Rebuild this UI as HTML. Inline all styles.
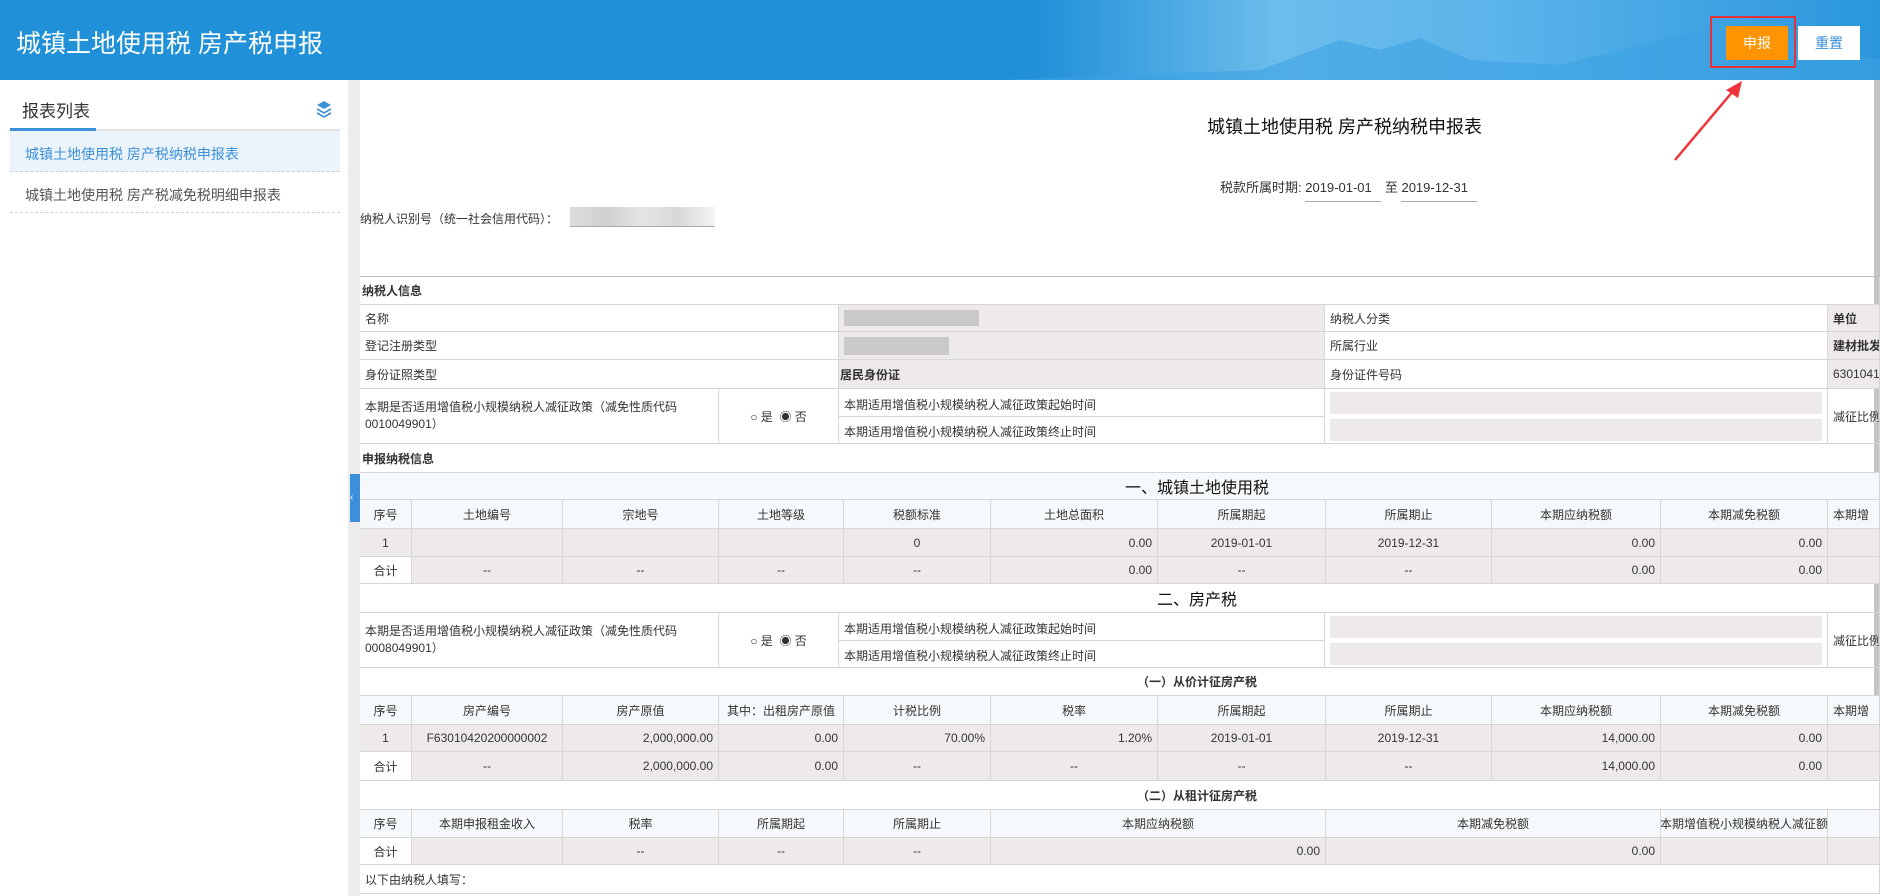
<!DOCTYPE html><html><head><meta charset="utf-8"><style>
*{margin:0;padding:0;box-sizing:border-box}
body{width:1880px;height:896px;overflow:hidden;background:#fff;font-family:"Liberation Sans","Noto Sans CJK SC",sans-serif;font-size:12px;color:#333;position:relative}
.hd{position:absolute;left:0;top:0;width:1880px;height:80px;background:linear-gradient(90deg,#2090d8 0%,#2090d8 55%,#6dbdec 68%,#5ab3ea 80%,#2a96dc 100%);overflow:hidden}
.hd h1{position:absolute;left:16px;top:24px;font-size:25px;font-weight:normal;color:#fff}
.a{position:absolute}
.row{position:absolute;left:360px;display:flex;width:1520px}
.c{border-right:1px solid #d6d6d6;border-bottom:1px solid #d6d6d6;display:flex;align-items:center;padding:0 5px;white-space:nowrap;overflow:hidden;height:100%}
.g{background:#efeaea}
.ct{justify-content:center}.r{justify-content:flex-end}
.w{background:#fff}.hb{background:#f6f9fb}
</style></head><body>
<div class="hd"><h1>城镇土地使用税 房产税申报</h1>
<svg class="a" style="left:1000px;top:0" width="880" height="80"><path d="M0 80 L260 70 L340 40 L380 50 L420 38 L470 60 L560 65 L640 45 L700 30 L730 20 L780 35 L820 50 L880 60 L880 80Z" fill="#3ca2e2" opacity=".6"/></svg>
<div class="a" style="left:1710px;top:16px;width:86px;height:52px;border:2px solid #e8323a"></div>
<div class="a" style="left:1726px;top:26px;width:62px;height:34px;background:#ff9400;color:#fff;font-size:14px;text-align:center;line-height:34px">申报</div>
<div class="a" style="left:1798px;top:26px;width:62px;height:34px;background:#fff;color:#3a8fd8;font-size:14px;text-align:center;line-height:34px">重置</div>
</div>
<svg class="a" style="left:1660px;top:76px" width="100" height="100"><line x1="15" y1="84" x2="74" y2="14" stroke="#f0343c" stroke-width="2.5"/><path d="M82 5 L66 14 L78 22Z" fill="#f0343c"/></svg>
<div class="a" style="left:22px;top:97px;font-size:17px;color:#333">报表列表</div>
<svg class="a" style="left:316px;top:100px" width="16" height="18"><path d="M8 1 L15 5 L8 9 L1 5Z" fill="#3c8fd9"/><path d="M1 9 L8 13 L15 9" stroke="#3c8fd9" fill="none" stroke-width="1.6"/><path d="M1 13 L8 17 L15 13" stroke="#3c8fd9" fill="none" stroke-width="1.6"/></svg>
<div class="a" style="left:10px;top:129px;width:330px;height:2px;background:#e2e2e2"></div>
<div class="a" style="left:10px;top:128px;width:86px;height:3px;background:#3c8fd9"></div>
<div class="a" style="left:10px;top:131px;width:330px;height:41px;background:#ebf4fc;border-bottom:1px dashed #d0d0d0;color:#3c8fd9;font-size:14px;padding:13px 15px">城镇土地使用税 房产税纳税申报表</div>
<div class="a" style="left:10px;top:172px;width:330px;height:41px;border-bottom:1px dashed #d0d0d0;color:#555;font-size:14px;padding:13px 15px">城镇土地使用税 房产税减免税明细申报表</div>
<div class="a" style="left:348px;top:80px;width:12px;height:816px;background:#ececec"></div>
<div class="a" style="left:350px;top:474px;width:10px;height:48px;background:#3c8fd9;color:#fff;font-size:10px;line-height:48px">‹</div>
<div class="a" style="left:1874px;top:80px;width:6px;height:680px;background:#c4c4c4"></div>
<div class="a" style="left:1207px;top:113px;font-size:18px;color:#111">城镇土地使用税 房产税纳税申报表</div>
<div class="a" style="left:1220px;top:177px;font-size:13px;color:#333">税款所属时期: <span style="display:inline-block;width:76px;border-bottom:1px solid #aaa;padding-bottom:6px">2019-01-01</span> 至 <span style="display:inline-block;width:76px;border-bottom:1px solid #aaa;padding-bottom:6px">2019-12-31</span></div>
<div class="a" style="left:360px;top:210px;font-size:12px">纳税人识别号（统一社会信用代码）：</div>
<div class="a" style="left:570px;top:207px;width:145px;height:20px;background:linear-gradient(90deg,#ddd,#d0d0d0,#e5e5e5,#d8d8d8,#f4f4f4);border-bottom:1px solid #aaa"></div>
<div class="a" style="left:360px;top:276px;width:1520px;border-top:1px solid #bbb"></div>

<div class="row" style="top:277px;height:28px"><div class="c" style="width:1520px;font-weight:bold;padding-left:2px">纳税人信息</div></div>
<div class="row" style="top:305px;height:27px"><div class="c" style="width:479px">名称</div><div class="c g" style="width:486px"><span style="width:135px;height:16px;background:#bbb;opacity:.7"></span></div><div class="c" style="width:503px">纳税人分类</div><div class="c g" style="width:52px;font-weight:bold">单位</div></div>
<div class="row" style="top:332px;height:28px"><div class="c" style="width:479px">登记注册类型</div><div class="c g" style="width:486px"><span style="width:105px;height:18px;background:#bbb;opacity:.7"></span></div><div class="c" style="width:503px">所属行业</div><div class="c g" style="width:52px;font-weight:bold">建材批发</div></div>
<div class="row" style="top:360px;height:29px"><div class="c" style="width:479px">身份证照类型</div><div class="c g" style="width:486px;font-weight:bold;padding-left:1px">居民身份证</div><div class="c" style="width:503px">身份证件号码</div><div class="c g" style="width:52px">6301041</div></div>
<div class="row" style="top:389px;height:55px"><div class="c" style="width:359px;white-space:normal;line-height:17px">本期是否适用增值税小规模纳税人减征政策（减免性质代码0010049901）</div><div class="c ct" style="width:120px">○ 是 &nbsp;◉ 否</div><div class="c" style="width:486px;padding:0;flex-direction:column;align-items:stretch"><div style="height:28px;border-bottom:1px solid #d6d6d6;padding:7px 5px">本期适用增值税小规模纳税人减征政策起始时间</div><div style="padding:6px 5px">本期适用增值税小规模纳税人减征政策终止时间</div></div><div class="c" style="width:503px;flex-direction:column;align-items:stretch;justify-content:space-around"><div style="height:22px;background:#efeaea"></div><div style="height:22px;background:#efeaea"></div></div><div class="c" style="width:52px">减征比例</div></div>
<div class="row" style="top:444px;height:29px"><div class="c" style="width:1520px;font-weight:bold;padding-left:2px">申报纳税信息</div></div>
<div class="row" style="top:473px;height:27px"><div class="c ct hb" style="width:1520px;font-size:16px;color:#111;padding-left:160px">一、城镇土地使用税</div></div>
<div class="row hb" style="top:500px;height:29px"><div class="c ct" style="width:52px">序号</div><div class="c ct" style="width:151px">土地编号</div><div class="c ct" style="width:156px">宗地号</div><div class="c ct" style="width:125px">土地等级</div><div class="c ct" style="width:147px">税额标准</div><div class="c ct" style="width:167px">土地总面积</div><div class="c ct" style="width:168px">所属期起</div><div class="c ct" style="width:166px">所属期止</div><div class="c ct" style="width:169px">本期应纳税额</div><div class="c ct" style="width:167px">本期减免税额</div><div class="c" style="width:52px">本期增</div></div>
<div class="row g" style="top:529px;height:28px"><div class="c ct" style="width:52px">1</div><div class="c" style="width:151px"></div><div class="c" style="width:156px"></div><div class="c" style="width:125px"></div><div class="c ct" style="width:147px">0</div><div class="c r" style="width:167px">0.00</div><div class="c ct" style="width:168px">2019-01-01</div><div class="c ct" style="width:166px">2019-12-31</div><div class="c r" style="width:169px">0.00</div><div class="c r" style="width:167px">0.00</div><div class="c" style="width:52px"></div></div>
<div class="row g" style="top:557px;height:27px"><div class="c ct w" style="width:52px">合计</div><div class="c ct" style="width:151px">--</div><div class="c ct" style="width:156px">--</div><div class="c ct" style="width:125px">--</div><div class="c ct" style="width:147px">--</div><div class="c r" style="width:167px">0.00</div><div class="c ct" style="width:168px">--</div><div class="c ct" style="width:166px">--</div><div class="c r" style="width:169px">0.00</div><div class="c r" style="width:167px">0.00</div><div class="c" style="width:52px"></div></div>
<div class="row" style="top:584px;height:29px"><div class="c ct" style="width:1520px;font-size:16px;color:#111;padding-left:160px">二、房产税</div></div>
<div class="row" style="top:613px;height:55px"><div class="c" style="width:359px;white-space:normal;line-height:17px">本期是否适用增值税小规模纳税人减征政策（减免性质代码0008049901）</div><div class="c ct" style="width:120px">○ 是 &nbsp;◉ 否</div><div class="c" style="width:486px;padding:0;flex-direction:column;align-items:stretch"><div style="height:28px;border-bottom:1px solid #d6d6d6;padding:7px 5px">本期适用增值税小规模纳税人减征政策起始时间</div><div style="padding:6px 5px">本期适用增值税小规模纳税人减征政策终止时间</div></div><div class="c" style="width:503px;flex-direction:column;align-items:stretch;justify-content:space-around"><div style="height:22px;background:#efeaea"></div><div style="height:22px;background:#efeaea"></div></div><div class="c" style="width:52px">减征比例</div></div>
<div class="row" style="top:668px;height:28px"><div class="c ct" style="width:1520px;font-weight:bold;padding-left:160px">（一）从价计征房产税</div></div>
<div class="row hb" style="top:696px;height:29px"><div class="c ct" style="width:52px">序号</div><div class="c ct" style="width:151px">房产编号</div><div class="c ct" style="width:156px">房产原值</div><div class="c ct" style="width:125px">其中：出租房产原值</div><div class="c ct" style="width:147px">计税比例</div><div class="c ct" style="width:167px">税率</div><div class="c ct" style="width:168px">所属期起</div><div class="c ct" style="width:166px">所属期止</div><div class="c ct" style="width:169px">本期应纳税额</div><div class="c ct" style="width:167px">本期减免税额</div><div class="c" style="width:52px">本期增</div></div>
<div class="row g" style="top:725px;height:27px"><div class="c ct" style="width:52px">1</div><div class="c ct" style="width:151px">F63010420200000002</div><div class="c r" style="width:156px">2,000,000.00</div><div class="c r" style="width:125px">0.00</div><div class="c r" style="width:147px">70.00%</div><div class="c r" style="width:167px">1.20%</div><div class="c ct" style="width:168px">2019-01-01</div><div class="c ct" style="width:166px">2019-12-31</div><div class="c r" style="width:169px">14,000.00</div><div class="c r" style="width:167px">0.00</div><div class="c" style="width:52px"></div></div>
<div class="row g" style="top:752px;height:29px"><div class="c ct w" style="width:52px">合计</div><div class="c ct" style="width:151px">--</div><div class="c r" style="width:156px">2,000,000.00</div><div class="c r" style="width:125px">0.00</div><div class="c ct" style="width:147px">--</div><div class="c ct" style="width:167px">--</div><div class="c ct" style="width:168px">--</div><div class="c ct" style="width:166px">--</div><div class="c r" style="width:169px">14,000.00</div><div class="c r" style="width:167px">0.00</div><div class="c" style="width:52px"></div></div>
<div class="row" style="top:781px;height:29px"><div class="c ct" style="width:1520px;font-weight:bold;padding-left:160px">（二）从租计征房产税</div></div>
<div class="row hb" style="top:810px;height:28px"><div class="c ct" style="width:52px">序号</div><div class="c ct" style="width:151px">本期申报租金收入</div><div class="c ct" style="width:156px">税率</div><div class="c ct" style="width:125px">所属期起</div><div class="c ct" style="width:147px">所属期止</div><div class="c ct" style="width:335px">本期应纳税额</div><div class="c ct" style="width:335px">本期减免税额</div><div class="c ct" style="width:167px">本期增值税小规模纳税人减征额</div><div class="c" style="width:52px"></div></div>
<div class="row g" style="top:838px;height:27px"><div class="c ct w" style="width:52px">合计</div><div class="c" style="width:151px"></div><div class="c ct" style="width:156px">--</div><div class="c ct" style="width:125px">--</div><div class="c ct" style="width:147px">--</div><div class="c r" style="width:335px">0.00</div><div class="c r" style="width:335px">0.00</div><div class="c" style="width:167px"></div><div class="c" style="width:52px"></div></div>
<div class="row" style="top:865px;height:29px"><div class="c" style="width:1520px">以下由纳税人填写：</div></div>
</body></html>
